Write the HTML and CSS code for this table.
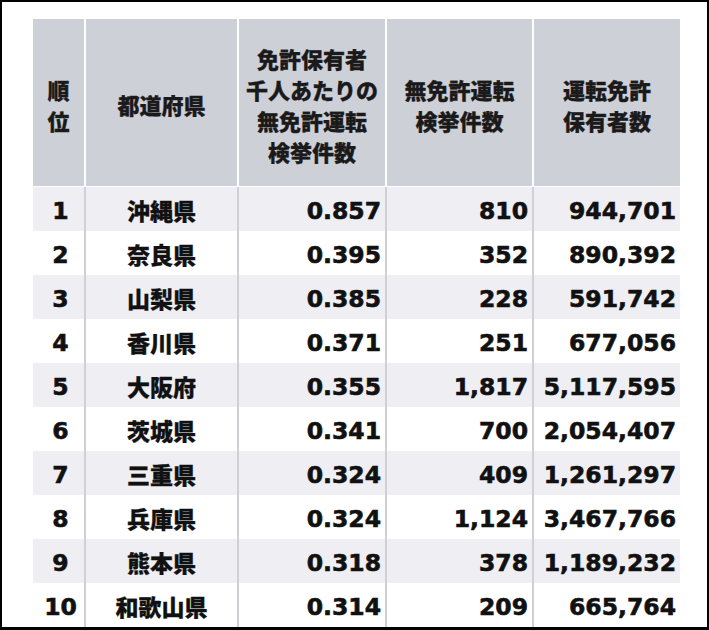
FILE: index.html
```html
<!DOCTYPE html>
<html lang="ja">
<head>
<meta charset="utf-8">
<title>無免許運転検挙件数</title>
<link rel="stylesheet" href="styles.css">
</head>
<body>
<div class="frame">
  <div class="table">
    <div class="row head">
      <div class="cell">順<br>位</div>
      <div class="cell">都道府県</div>
      <div class="cell">免許保有者<br>千人あたりの<br>無免許運転<br>検挙件数</div>
      <div class="cell">無免許運転<br>検挙件数</div>
      <div class="cell">運転免許<br>保有者数</div>
    </div>
    <div class="row odd"><div class="cell num c">1</div><div class="cell jp">沖縄県</div><div class="cell num">0.857</div><div class="cell num">810</div><div class="cell num">944,701</div></div>
    <div class="row"><div class="cell num c">2</div><div class="cell jp">奈良県</div><div class="cell num">0.395</div><div class="cell num">352</div><div class="cell num">890,392</div></div>
    <div class="row odd"><div class="cell num c">3</div><div class="cell jp">山梨県</div><div class="cell num">0.385</div><div class="cell num">228</div><div class="cell num">591,742</div></div>
    <div class="row"><div class="cell num c">4</div><div class="cell jp">香川県</div><div class="cell num">0.371</div><div class="cell num">251</div><div class="cell num">677,056</div></div>
    <div class="row odd"><div class="cell num c">5</div><div class="cell jp">大阪府</div><div class="cell num">0.355</div><div class="cell num">1,817</div><div class="cell num">5,117,595</div></div>
    <div class="row"><div class="cell num c">6</div><div class="cell jp">茨城県</div><div class="cell num">0.341</div><div class="cell num">700</div><div class="cell num">2,054,407</div></div>
    <div class="row odd"><div class="cell num c">7</div><div class="cell jp">三重県</div><div class="cell num">0.324</div><div class="cell num">409</div><div class="cell num">1,261,297</div></div>
    <div class="row"><div class="cell num c">8</div><div class="cell jp">兵庫県</div><div class="cell num">0.324</div><div class="cell num">1,124</div><div class="cell num">3,467,766</div></div>
    <div class="row odd"><div class="cell num c">9</div><div class="cell jp">熊本県</div><div class="cell num">0.318</div><div class="cell num">378</div><div class="cell num">1,189,232</div></div>
    <div class="row"><div class="cell num c">10</div><div class="cell jp">和歌山県</div><div class="cell num">0.314</div><div class="cell num">209</div><div class="cell num">665,764</div></div>
  </div>
</div>
</body>
</html>
```
FILE: styles.css
```css
* { box-sizing: border-box; }
html, body { margin: 0; padding: 0; background: #fff; }
.frame {
  width: 709px;
  height: 630px;
  border-style: solid;
  border-color: #000;
  border-width: 2px 2px 3px 2px;
  padding: 17px 0 0 31px;
  overflow: hidden;
  background: #fff;
}
.table {
  width: 647px;
  display: flex;
  flex-direction: column;
}
.row {
  display: grid;
  grid-template-columns: 51px 153px 148px 147px 148px;
  height: 44px;
  background: #fff;
}
.row.odd { background: #eeeef3; }
.row.head {
  height: 168px;
  border-bottom: 1px solid #fff;
}
.cell {
  display: flex;
  align-items: center;
  justify-content: center;
  color: #111;
  border-left: 2px solid #cfcfd5;
}
.cell:first-child { border-left: none; }
.head .cell {
  background: #ced0d8;
  border-left: 2px solid #fff;
  text-align: center;
  font-family: "Noto Sans CJK JP", "Noto Sans", sans-serif;
  font-weight: 900;
  font-size: 22px;
  line-height: 31px;
  color: #1a1a1a;
  padding-top: 4px;
  -webkit-text-stroke: 0.3px #1a1a1a;
}
.head .cell:first-child { border-left: none; }
.jp {
  font-family: "Noto Sans CJK JP", sans-serif;
  font-weight: 900;
  font-size: 23px;
  padding-top: 2px;
  -webkit-text-stroke: 0.3px #111;
}
.num {
  font-family: "DejaVu Sans", "Liberation Sans", sans-serif;
  font-weight: 700;
  font-size: 23.5px;
  justify-content: flex-end;
  padding-right: 4px;
  padding-top: 4px;
  -webkit-text-stroke: 0.6px #111;
}
.num.c {
  justify-content: center;
  padding-right: 0;
  padding-left: 4px;
}
```
